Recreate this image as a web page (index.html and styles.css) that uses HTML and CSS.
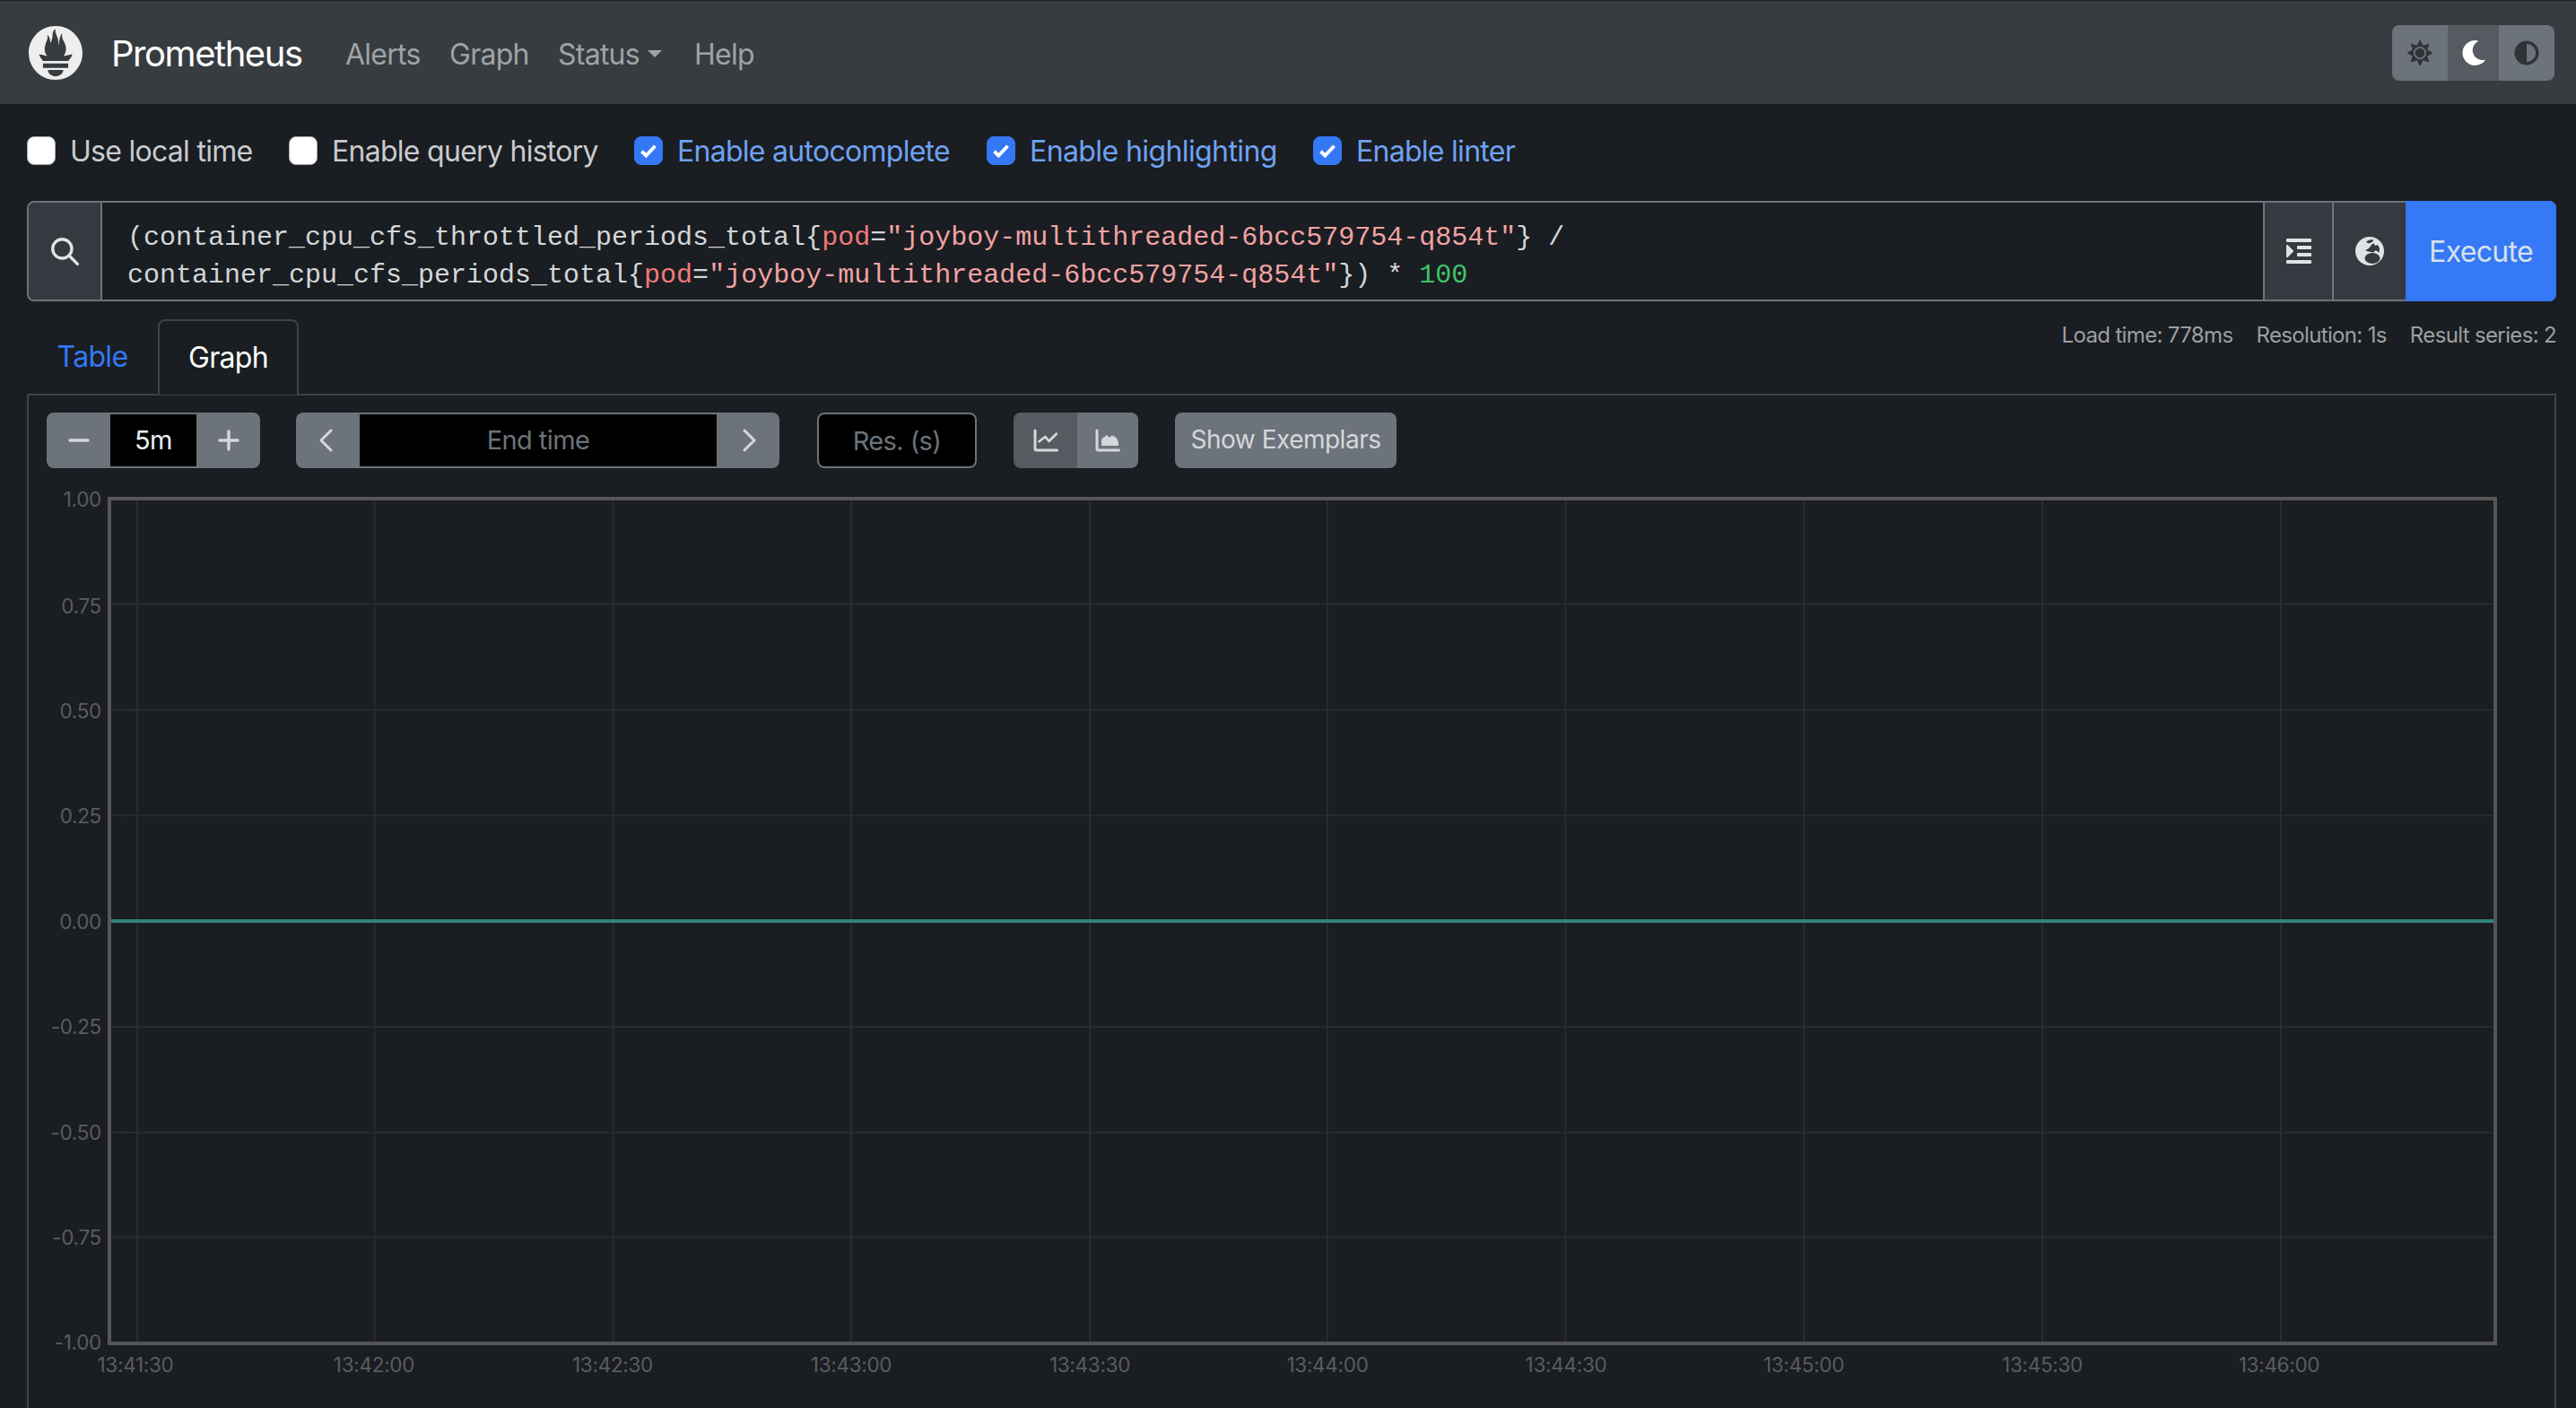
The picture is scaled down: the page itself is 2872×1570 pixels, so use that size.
FILE: index.html
```html
<!DOCTYPE html>
<html lang="en">
<head>
<meta charset="utf-8">
<title>Prometheus Time Series Collection and Processing Server</title>
<link rel="stylesheet" href="styles.css">
</head>
<body>
<nav class="navbar">
  <svg class="logo" viewBox="0 0 24 24"><path d="M12 0C5.373 0 0 5.372 0 11.999c0 6.627 5.373 12 12 12s12-5.373 12-12C24 5.372 18.627 0 12 0zm0 22.459c-1.885 0-3.414-1.26-3.414-2.814h6.828c0 1.554-1.529 2.814-3.414 2.814zm5.64-3.745H6.36v-2.046h11.28v2.046zm-.04-3.1H6.392c-.037-.043-.075-.085-.111-.129-1.155-1.402-1.427-2.134-1.691-2.88-.005-.025 1.401.287 2.399.511 0 0 .513.119 1.264.256-.721-.845-1.149-1.919-1.149-3.016 0-2.41 1.848-4.516 1.182-6.218.648.053 1.342 1.369 1.389 3.427.69-.954.979-2.696.979-3.764 0-1.106.729-2.39 1.458-2.434-.65 1.071.168 1.989.896 4.267.273.855.238 2.296.449 3.209.07-1.896.396-4.662 1.598-5.617-.53 1.203.079 2.707.495 3.43.671 1.166 1.078 2.049 1.078 3.72 0 1.12-.413 2.175-1.11 3.001.793-.149 1.34-.283 1.34-.283l2.575-.502s-.374 1.538-1.813 3.022z"/></svg>
  <span class="brand">Prometheus</span>
  <a class="nav-link nav-alerts">Alerts</a>
  <a class="nav-link nav-graph">Graph</a>
  <a class="nav-link nav-status">Status<i class="caret"></i></a>
  <a class="nav-link nav-help">Help</a>
  <div class="theme-group">
    <span class="theme-btn theme-sun"><svg viewBox="0 0 512 512"><path d="M256 160c-52.9 0-96 43.1-96 96s43.1 96 96 96 96-43.1 96-96-43.1-96-96-96zm246.4 80.5l-94.7-47.3 33.5-100.4c4.5-13.6-8.4-26.5-21.9-21.9l-100.4 33.5-47.4-94.8c-6.4-12.8-24.6-12.8-31 0l-47.3 94.7L92.7 70.8c-13.6-4.5-26.5 8.4-21.9 21.9l33.5 100.4-94.7 47.4c-12.8 6.4-12.8 24.6 0 31l94.7 47.3-33.5 100.5c-4.5 13.6 8.4 26.5 21.9 21.9l100.4-33.5 47.3 94.7c6.4 12.8 24.6 12.8 31 0l47.3-94.7 100.4 33.5c13.6 4.5 26.5-8.4 21.9-21.9l-33.5-100.4 94.7-47.3c13-6.5 13-24.7.2-31.1zm-155.9 106c-49.9 49.9-131.1 49.9-181 0-49.9-49.9-49.9-131.1 0-181 49.9-49.9 131.1-49.9 181 0 49.9 49.9 49.9 131.1 0 181z"/></svg></span>
    <span class="theme-btn theme-moon"><svg viewBox="0 0 512 512"><path d="M283.211 512c78.962 0 151.079-35.925 198.857-94.792 7.068-8.708-.639-21.43-11.562-19.35-124.203 23.654-238.262-71.576-238.262-196.954 0-72.222 38.662-138.635 101.498-174.394 9.686-5.512 7.25-20.197-3.756-22.23A258.156 258.156 0 0 0 283.211 0c-141.309 0-256 114.511-256 256 0 141.309 114.511 256 256 256z"/></svg></span>
    <span class="theme-btn theme-auto"><svg viewBox="0 0 512 512"><path d="M8 256c0 136.966 111.033 248 248 248s248-111.034 248-248S392.966 8 256 8 8 119.033 8 256zm248 184V72c101.705 0 184 82.311 184 184 0 101.705-82.311 184-184 184z"/></svg></span>
  </div>
</nav>

<main class="page">
  <div class="options">
    <label class="opt opt-local"><i class="box"></i>Use local time</label>
    <label class="opt opt-history"><i class="box"></i>Enable query history</label>
    <label class="opt opt-auto on"><i class="box"><svg viewBox="0 0 20 20"><path d="M5 10.500l3.200 3.200L15 6.500"/></svg></i>Enable autocomplete</label>
    <label class="opt opt-high on"><i class="box"><svg viewBox="0 0 20 20"><path d="M5 10.500l3.200 3.200L15 6.500"/></svg></i>Enable highlighting</label>
    <label class="opt on"><i class="box"><svg viewBox="0 0 20 20"><path d="M5 10.500l3.200 3.200L15 6.500"/></svg></i>Enable linter</label>
  </div>

  <div class="query">
    <div class="addon addon-search"><svg class="ico-search" viewBox="0 0 32 32"><circle cx="13.500" cy="13.500" r="10"/><path d="M21 21l8.500 8.500"/></svg></div>
    <div class="code">
      <div>(container_cpu_cfs_throttled_periods_total{<span class="k">pod</span>=<span class="s">"joyboy-multithreaded-6bcc579754-q854t"</span>} /</div>
      <div>container_cpu_cfs_periods_total{<span class="k">pod</span>=<span class="s">"joyboy-multithreaded-6bcc579754-q854t"</span>}) * <span class="n">100</span></div>
    </div>
    <div class="addon addon-indent"><svg class="ico-indent" viewBox="0 0 448 512"><path d="M27.31 363.3l96-96a16 16 0 0 0 0-22.62l-96-96C17.27 138.66 0 145.78 0 160v192c0 14.31 17.33 21.3 27.31 11.3zM432 416H16a16 16 0 0 0-16 16v32a16 16 0 0 0 16 16h416a16 16 0 0 0 16-16v-32a16 16 0 0 0-16-16zm3.17-128H204.83A12.82 12.82 0 0 0 192 300.83v38.34A12.82 12.82 0 0 0 204.83 352h230.34A12.82 12.82 0 0 0 448 339.17v-38.34A12.82 12.82 0 0 0 435.17 288zm0-128H204.83A12.82 12.82 0 0 0 192 172.83v38.34A12.82 12.82 0 0 0 204.83 224h230.34A12.82 12.82 0 0 0 448 211.17v-38.34A12.82 12.82 0 0 0 435.17 160zM432 32H16A16 16 0 0 0 0 48v32a16 16 0 0 0 16 16h416a16 16 0 0 0 16-16V48a16 16 0 0 0-16-16z"/></svg></div>
    <div class="addon addon-globe"><svg class="ico-globe" viewBox="0 0 32 32"><circle class="g-fill" cx="16" cy="16" r="16"/><path class="g-cut" d="M12 6C14 3.500 18 2.800 20.500 3.800L18.500 6 15 7.500z"/><path class="g-cut" d="M11 15.500C15 13 17 11.500 18 8.500L21 7.500 22 10 25 9 27 13 26.500 17.500 22.500 15 20.500 17.500 15 16.500z"/><ellipse class="g-cut" cx="19" cy="24" rx="8.500" ry="6"/></svg></div>
    <button class="execute">Execute</button>
  </div>

  <div class="tabs-row">
    <a class="tab tab-table">Table</a>
    <a class="tab tab-graph">Graph</a>
    <div class="stats"><span>Load time: 778ms</span><span>Resolution: 1s</span><span>Result series: 2</span></div>
  </div>

  <section class="panel">
    <div class="controls">
      <div class="group g-range">
        <span class="btn b-71"><svg class="ico-sm" viewBox="0 0 24 24"><path d="M2 12h20"/></svg></span>
        <span class="field f-range">5m</span>
        <span class="btn b-71"><svg class="ico-sm" viewBox="0 0 24 24"><path d="M2 12h20M12 2v20"/></svg></span>
      </div>
      <div class="group g-time">
        <span class="btn b-71"><svg class="ico-chev chev-l" viewBox="0 0 16 28"><path d="M14 3L3 14l11 11"/></svg></span>
        <span class="field f-time">End time</span>
        <span class="btn b-70"><svg class="ico-chev chev-r" viewBox="0 0 16 28"><path d="M2 3l11 11L2 25"/></svg></span>
      </div>
      <div class="res">Res. (s)</div>
      <div class="group g-type">
        <span class="btn b-71 active"><svg class="ico-chart" viewBox="0 0 28 28"><path class="st" d="M2 3v20.500c0 1 .5 1.500 1.500 1.500H26.500"/><path class="st2" d="M5.500 16l8-6 4 5 9-9"/></svg></span>
        <span class="btn b-68"><svg class="ico-chart" viewBox="0 0 28 28"><path class="st" d="M2 3v20.500c0 1 .5 1.500 1.500 1.500H26.500"/><path class="fl" d="M7 18.500V14C8 11 10 10 11 10L13 8 16 11 18.500 8.500 22 10C25 12 26 15 26 18.500 26 19.500 25.500 20 24.500 20H8.500C7.500 20 7 19.500 7 18.500z"/></svg></span>
      </div>
      <span class="btn exemplars">Show Exemplars</span>
    </div>

    <svg class="chart" viewBox="32 530 2816 1040">
      <g class="grid">
        <path d="M124 673.800H2780M124 791.500H2780M124 909.200H2780M124 1145H2780M124 1262.700H2780M124 1379.500H2780"/>
        <path d="M153 558V1496M417.500 558V1496M683.500 558V1496M949 558V1496M1215 558V1496M1480 558V1496M1745.500 558V1496M2011 558V1496M2277 558V1496M2543 558V1496"/>
      </g>
      <rect class="frame" x="122" y="556" width="2660" height="942"/>
      <path class="series" d="M124 1027H2780"/>
      <g class="ylabels">
        <text x="113" y="565">1.00</text>
        <text x="113" y="684">0.75</text>
        <text x="113" y="801">0.50</text>
        <text x="113" y="918">0.25</text>
        <text x="113" y="1036">0.00</text>
        <text x="113" y="1153">-0.25</text>
        <text x="113" y="1271">-0.50</text>
        <text x="113" y="1388">-0.75</text>
        <text x="113" y="1505">-1.00</text>
      </g>
      <g class="xlabels">
        <text x="151" y="1530">13:41:30</text>
        <text x="417" y="1530">13:42:00</text>
        <text x="683" y="1530">13:42:30</text>
        <text x="949" y="1530">13:43:00</text>
        <text x="1215" y="1530">13:43:30</text>
        <text x="1480" y="1530">13:44:00</text>
        <text x="1746" y="1530">13:44:30</text>
        <text x="2011" y="1530">13:45:00</text>
        <text x="2277" y="1530">13:45:30</text>
        <text x="2541" y="1530">13:46:00</text>
      </g>
    </svg>
  </section>
</main>
</body>
</html>
```

FILE: styles.css
```css
* { box-sizing: border-box; }
html, body { margin: 0; height: 100%; }
body {
  background: #1a1d21;
  color: #d5d7d9;
  font-family: Inter, "Liberation Sans", sans-serif;
  font-size: 32px;
  overflow: hidden;
}

/* navbar */
.navbar {
  height: 116px;
  display: flex;
  align-items: center;
  padding: 0 24px 0 32px;
  background: #373c40;
  border-top: 2px solid #2a2a2a;
  box-shadow: inset 0 1px 0 #46494b;
}
.logo { width: 60px; height: 60px; fill: #eeeeee; flex: none; }
.brand { color: #fff; font-size: 40px; margin-left: 32px; letter-spacing: -1.45px; width: 213px; white-space: nowrap; }
.nav-link { color: #a0a3a5; letter-spacing: -0.75px; white-space: nowrap; padding-top: 2px; }
.nav-alerts { margin-left: 48px; width: 116px; }
.nav-graph { width: 121px; }
.nav-status { width: 152px; display: flex; align-items: center; }
.caret { margin-left: 9px; border: 8px solid transparent; border-top-color: #a0a3a5; border-bottom: 0; }
.theme-group { margin-left: auto; display: flex; height: 62px; width: 181px; border-radius: 8px; overflow: hidden; }
.theme-btn { display: flex; align-items: center; justify-content: center; background: #6c737b; fill: #2f3438; }
.theme-btn svg { width: 28px; height: 28px; }
.theme-sun { width: 62px; }
.theme-moon { width: 57px; background: #565b62; fill: #fff; }
.theme-auto { width: 62px; }

/* options row */
.page { padding: 28px 22px 0 30px; }
.options { display: flex; align-items: center; height: 48px; }
.opt { display: flex; align-items: center; color: #c9cbcd; letter-spacing: -0.72px; white-space: nowrap; }
.box { width: 32px; height: 32px; border-radius: 8px; margin-right: 16px; background: #fff; border: 1px solid #a9abad; flex: none; display: flex; }
.box svg { width: 100%; height: 100%; fill: none; stroke: #fff; stroke-width: 2.6; }
.opt-local { width: 292px; }
.opt-history { width: 385px; }
.opt-auto { width: 393px; }
.opt-high { width: 364px; letter-spacing: -0.6px; }
.on { color: #6fa3f3; }
.on .box { background: #3478f6; border-color: #3478f6; }

/* query */
.query {
  margin-top: 32px;
  height: 112px;
  display: flex;
  border: 2px solid #6c757d;
  border-radius: 8px;
}
.addon { background: #343a3f; display: flex; align-items: center; justify-content: center; flex: none; }
.addon-search { width: 82px; border-right: 2px solid #6c757d; border-radius: 6px 0 0 6px; }
.addon-indent { width: 79px; border-left: 2px solid #6c757d; border-right: 2px solid #6c757d; }
.addon-globe { width: 80px; }
.ico-search { width: 34px; height: 34px; fill: none; stroke: #e1e3e6; stroke-width: 3.2; stroke-linecap: round; }
.ico-indent { width: 28px; height: 32px; fill: #dfe2e6; }
.ico-globe { width: 32px; height: 32px; }
.g-fill { fill: #dfe2e6; }
.g-cut { fill: #343a3f; }
.code {
  flex: 1;
  padding: 11px 0 0 28px;
  font-family: "Liberation Mono", monospace;
  font-size: 30px;
  line-height: 42px;
  color: #d4d6d8;
  display: flex;
  flex-direction: column;
  justify-content: center;
  white-space: pre;
}
.k { color: #f07a78; }
.s { color: #f2a3a3; }
.n { color: #3fc56a; }
.execute {
  width: 168px;
  margin: -2px -2px -2px 0;
  border: 2px solid #3478f6;
  background: #3579f6;
  color: #d8e0ea;
  font: inherit;
  letter-spacing: -0.7px;
  border-radius: 0 8px 8px 0;
  padding: 0;
}

/* tabs */
.tabs-row { position: relative; margin-top: 20px; height: 83px; display: flex; }
.tab { display: flex; align-items: center; justify-content: center; height: 84px; padding-bottom: 2px; letter-spacing: -0.7px; }
.tab-table { width: 146px; color: #3478f6; }
.tab-graph { width: 157px; color: #fff; background: #1a1d21; border: 2px solid #3f4347; border-bottom: 0; border-radius: 8px 8px 0 0; z-index: 1; }
.stats {
  position: absolute;
  right: 0;
  top: 0;
  display: flex;
  gap: 26px;
  height: 34px;
  align-items: center;
  font-size: 24px;
  letter-spacing: -0.65px;
  color: #9c9fa2;
}

/* panel */
.panel { border: 2px solid #3f4347; border-bottom: 0; padding: 19px 0 0 20px; height: 1200px; }
.controls { display: flex; height: 62px; }
.group { display: flex; border-radius: 8px; overflow: hidden; flex: none; }
.btn { display: flex; align-items: center; justify-content: center; background: #6c737b; color: #d5d8db; flex: none; }
.b-71 { width: 71px; }
.b-70 { width: 70px; }
.b-68 { width: 68px; }
.active { background: #565b62; }
.field { background: #000; display: flex; align-items: center; justify-content: center; border-top: 2px solid #6c737b; border-bottom: 2px solid #6c737b; padding-bottom: 1px; font-size: 29px; letter-spacing: -0.6px; }
.f-range { width: 96px; color: #eef0f2; }
.f-time { width: 398px; color: #6c737b; }
.g-range { margin-right: 40px; }
.g-time { margin-right: 42px; }
.res {
  width: 178px;
  margin-right: 41px;
  background: #000;
  border: 2px solid #6c737b;
  border-radius: 8px;
  color: #6c737b;
  display: flex;
  align-items: center;
  justify-content: center;
  font-size: 29px;
  letter-spacing: -0.6px;
}
.g-type { margin-right: 41px; }
.exemplars { width: 247px; border-radius: 8px; font-size: 28px; letter-spacing: -0.5px; padding-bottom: 2px; }
.ico-sm { width: 24px; height: 24px; fill: none; stroke: #d5d8db; stroke-width: 3.4; stroke-linecap: round; }
.ico-chev { width: 16px; height: 28px; fill: none; stroke: #d5d8db; stroke-width: 3; stroke-linecap: round; stroke-linejoin: round; }
.chev-l { margin-right: 5px; }
.chev-r { margin-left: 4px; }
.ico-chart { width: 28px; height: 28px; fill: none; }
.st { stroke: #d5d8db; stroke-width: 3; stroke-linecap: round; fill: none; }
.st2 { stroke: #d5d8db; stroke-width: 2.8; stroke-linejoin: round; fill: none; }
.fl { fill: #d5d8db; }

/* chart */
.chart { display: block; width: 2816px; height: 1040px; margin: 8px 0 0 -20px; }
.grid path { stroke: #282b2f; stroke-width: 2; fill: none; }
.frame { fill: none; stroke: #565656; stroke-width: 4; }
.series { stroke: #32827e; stroke-width: 4; fill: none; }
.ylabels text, .xlabels text { fill: #5a5c5e; font-size: 22.5px; font-family: Inter, "Liberation Sans", sans-serif; letter-spacing: -0.3px; }
.ylabels text { text-anchor: end; }
.xlabels text { text-anchor: middle; }
```
